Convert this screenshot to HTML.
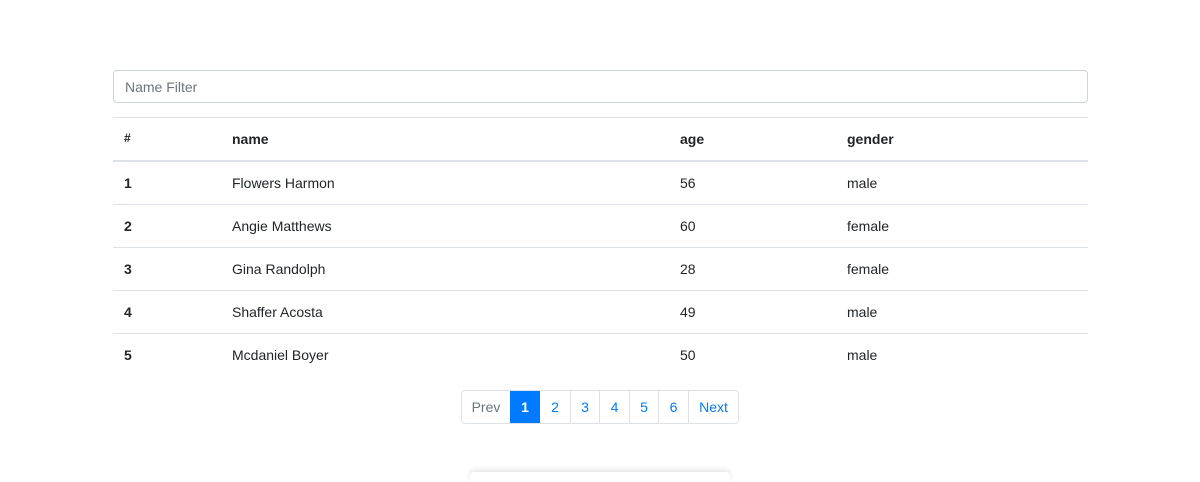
<!DOCTYPE html>
<html><head><style>
body{margin:0;background:#fff;font-family:"Liberation Sans",sans-serif;font-size:14px;color:#212529;width:1200px;height:476px;overflow:hidden;position:relative}
.inp{position:absolute;left:113px;top:70px;width:973px;height:31px;border:1px solid #ced4da;border-radius:4px;box-sizing:content-box}
.inp span{position:absolute;left:11px;top:8px;color:#6c757d}
.row{position:absolute;left:113px;width:975px;height:43px;border-top:1px solid #dee2e6}
.row div{position:absolute;top:13px}
.c0{left:11px;font-weight:bold}.c1{left:119px}.c2{left:567px}.c3{left:734px}
.hd div{font-weight:bold}
.pg{position:absolute;top:390px;left:461px;height:32px;display:flex;border:1px solid #dee2e6;border-radius:4px;overflow:hidden}
.pg div{height:32px;line-height:32px;text-align:center;color:#007bff;border-left:1px solid #dee2e6;box-sizing:border-box}
.pg div:first-child{border-left:none;color:#6c757d}
.pg .a{background:#007bff;color:#fff;font-weight:bold;border-left:none}
.sh{position:absolute;left:470px;top:472px;width:260px;height:10px;box-shadow:0 -2px 6px rgba(0,0,0,.12);border-radius:4px}
</style></head><body>
<div class="inp"><span>Name Filter</span></div>
<div class="row hd" style="top:117px;border-bottom:2px solid #dee2e6;height:42px"><div class="c0" style="font-size:12px">#</div><div class="c1">name</div><div class="c2">age</div><div class="c3">gender</div></div>
<div class="row" style="top:161px"><div class="c0">1</div><div class="c1">Flowers Harmon</div><div class="c2">56</div><div class="c3">male</div></div>
<div class="row" style="top:204px"><div class="c0">2</div><div class="c1">Angie Matthews</div><div class="c2">60</div><div class="c3">female</div></div>
<div class="row" style="top:247px"><div class="c0">3</div><div class="c1">Gina Randolph</div><div class="c2">28</div><div class="c3">female</div></div>
<div class="row" style="top:290px"><div class="c0">4</div><div class="c1">Shaffer Acosta</div><div class="c2">49</div><div class="c3">male</div></div>
<div class="row" style="top:333px"><div class="c0">5</div><div class="c1">Mcdaniel Boyer</div><div class="c2">50</div><div class="c3">male</div></div>
<div class="pg"><div style="width:48px">Prev</div><div class="a" style="width:30px">1</div><div style="width:30px;border-left:none">2</div><div style="width:29px">3</div><div style="width:30px">4</div><div style="width:29px">5</div><div style="width:30px">6</div><div style="width:50px">Next</div></div>
<div class="sh"></div>
</body></html>
